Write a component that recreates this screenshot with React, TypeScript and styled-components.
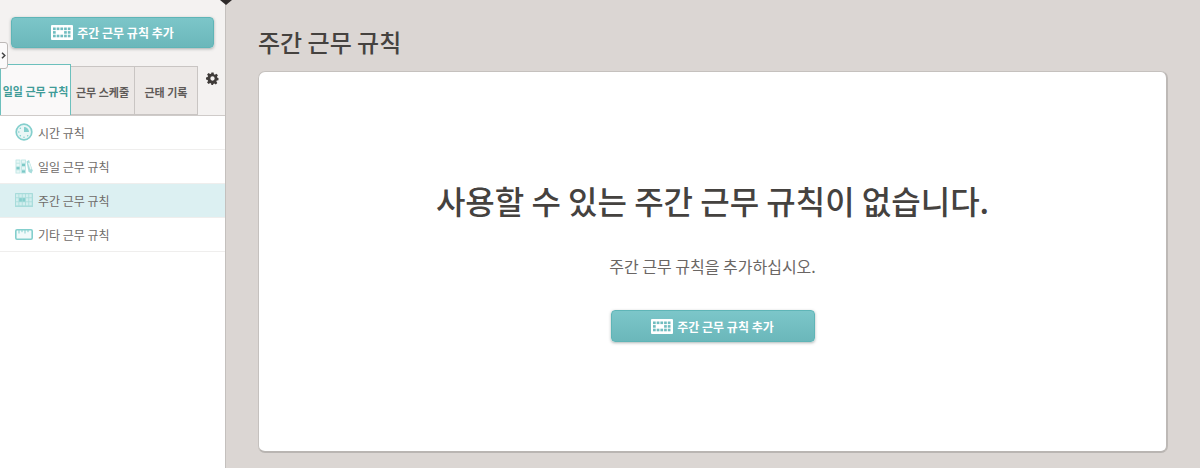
import React from "react";
import styled, { createGlobalStyle } from "styled-components";

const Global = createGlobalStyle`
  html, body { margin: 0; padding: 0; height: 100%; overflow: hidden; }
  body { font-family: "Noto Sans CJK KR", "Noto Sans", sans-serif; background: #dbd6d3; }
  #root { height: 468px; }
`;

const Page = styled.div`
  position: relative;
  display: flex;
  width: 1200px;
  height: 468px;
  overflow: hidden;
`;

const Sidebar = styled.aside`
  position: relative;
  flex: 0 0 225px;
  height: 100%;
  display: flex;
  flex-direction: column;
  background: #fff;
  border-right: 1px solid #c4c0bd;
  box-sizing: content-box;
`;

const SidebarTop = styled.div`
  height: 116px;
  box-sizing: border-box;
  background: #f4f2f1;
  border-bottom: 1px solid #cfcbc9;
  padding: 17px 11px 0 0;
  display: flex;
  flex-direction: column;
`;

const AddButton = styled.button<{ $width: number }>`
  width: ${(p) => p.$width}px;
  height: 32px;
  box-sizing: border-box;
  display: flex;
  align-items: center;
  justify-content: center;
  gap: 4px;
  padding: 0;
  color: #fff;
  font: 700 12px "Noto Sans CJK KR", sans-serif;
  background: linear-gradient(#7cc6c9, #6bb7ba);
  border: 1px solid #5fb5b7;
  border-radius: 4px;
  box-shadow: 0 1px 3px rgba(70, 90, 90, 0.45);
`;

const SideAdd = styled(AddButton)`
  margin-left: 11px;
`;

const CardAdd = styled(AddButton)`
  margin-top: 32px;
`;

const TabRow = styled.div`
  display: flex;
  align-items: flex-start;
  margin-top: 16px;
`;

const Tab = styled.div<{ $active?: boolean; $width: number }>`
  width: ${(p) => p.$width}px;
  height: ${(p) => (p.$active ? 51 : 49)}px;
  margin-top: ${(p) => (p.$active ? 0 : 2)}px;
  padding-top: 2px;
  box-sizing: border-box;
  display: flex;
  align-items: center;
  justify-content: center;
  white-space: nowrap;
  font-size: 11px;
  font-weight: 700;
  color: ${(p) => (p.$active ? "#3f9c98" : "#5e5a58")};
  background: ${(p) => (p.$active ? "#faf9f9" : "#ece8e6")};
  border: 1px solid ${(p) => (p.$active ? "#6cc0bd" : "#c9c5c3")};
  border-bottom: ${(p) => (p.$active ? "none" : "1px solid #c9c5c3")};
  border-left-width: ${(p) => (p.$active ? 1 : 0)}px;
  position: relative;
  z-index: ${(p) => (p.$active ? 1 : 0)};
`;

const Gear = styled.div`
  flex: 1;
  display: flex;
  justify-content: flex-end;
  padding: 8px 0 0 0;
  margin-right: -5px;
  color: #3f3b39;
`;

const Menu = styled.ul`
  list-style: none;
  margin: 0;
  padding: 0;
`;

const MenuItem = styled.li<{ $active?: boolean }>`
  height: 34px;
  box-sizing: border-box;
  display: flex;
  align-items: center;
  gap: 5px;
  padding: 0 0 1px 15px;
  font-size: 12px;
  color: #6f6b69;
  background: ${(p) => (p.$active ? "#dcf0f2" : "#fff")};
  border-bottom: 1px solid #efeeed;
`;

const Expander = styled.div`
  position: absolute;
  left: -3px;
  top: 42px;
  width: 11px;
  height: 27px;
  box-sizing: border-box;
  background: #fbfafa;
  border: 1px solid #bdb9b7;
  border-radius: 0 3px 3px 0;
  display: flex;
  align-items: center;
  justify-content: flex-end;
  padding-right: 1px;
  color: #444;
  z-index: 3;
`;

const Caret = styled.div`
  position: absolute;
  left: 220px;
  top: 0;
  width: 0;
  height: 0;
  border-left: 6px solid transparent;
  border-right: 6px solid transparent;
  border-top: 5px solid #2e2a2a;
  z-index: 4;
`;

const Main = styled.main`
  flex: 1;
  min-width: 0;
  display: flex;
  flex-direction: column;
  padding: 25px 32px 15px 32px;
  box-sizing: border-box;
`;

const Title = styled.h1`
  margin: 0 0 10px;
  height: 36px;
  line-height: 34px;
  font-size: 24px;
  font-weight: 500;
  color: #45423f;
`;

const Card = styled.section`
  flex: 1;
  display: flex;
  flex-direction: column;
  align-items: center;
  background: #fff;
  border: 1px solid #c5c1be;
  border-bottom: 2px solid #b9b5b2;
  border-right: 2px solid #bdb9b6;
  border-radius: 7px;
  box-sizing: border-box;
  padding-top: 104px;
`;

const Heading = styled.h2`
  margin: 0;
  height: 48px;
  line-height: 48px;
  font-size: 32px;
  font-weight: 500;
  color: #45423f;
  white-space: nowrap;
`;

const Sub = styled.p`
  margin: 30px 0 0;
  height: 24px;
  line-height: 24px;
  font-size: 16px;
  color: #6a6664;
`;

const GridIcon = () => (
  <svg width="22" height="15" viewBox="0 0 22 15">
    <rect width="22" height="15" rx="1" fill="#fff" />
    {[0, 1, 2].map((r) =>
      [0, 1, 2, 3, 4].map((c) => (
        <rect
          key={`${r}-${c}`}
          x={2 + c * 3.7}
          y={2.5 + r * 3.6}
          width="2.7"
          height="2.6"
          fill={r === 1 && (c === 1 || c === 2) ? "#fff" : "#6fbcbf"}
        />
      ))
    )}
  </svg>
);

const ClockIcon = () => (
  <svg width="18" height="18" viewBox="0 0 18 18">
    <circle cx="9" cy="9" r="7.8" fill="#e9f6f6" stroke="#84cfcd" strokeWidth="1.7" />
    <path d="M9 9V4a5 5 0 0 1 5 5Z" fill="#84cfcd" />
    {[180, 225, 270, 315, 135].map((a) => (
      <circle
        key={a}
        cx={9 + 5.2 * Math.sin((a * Math.PI) / 180)}
        cy={9 - 5.2 * Math.cos((a * Math.PI) / 180)}
        r="0.8"
        fill="#84cfcd"
      />
    ))}
  </svg>
);

const DayIcon = () => (
  <svg width="18" height="15" viewBox="0 0 18 15">
    {[0, 1].map((c) => (
      <rect key={c} x={0.5 + c * 5.5} y="0.5" width="5" height="14" rx="0.5" fill="#c4e8e7" />
    ))}
    {[0, 1, 2, 3].map((r) => (
      <React.Fragment key={r}>
        <rect x="1.5" y={1.5 + r * 3.3} width="3" height="2.2" fill={r === 2 ? "#7cc9c7" : "#e8f7f6"} />
        <rect x="7" y={1.5 + r * 3.3} width="3" height="2.2" fill={r === 1 || r === 3 ? "#7cc9c7" : "#e8f7f6"} />
      </React.Fragment>
    ))}
    <path d="M11.5 2.5 14 1l3.7 10.5-1.2 3-3-1.8Z" fill="#a7dcdb" />
    <path d="M13 4l1.6-.6 2 6.5-1.4.6Z" fill="#e8f7f6" />
  </svg>
);

const WeekIcon = () => (
  <svg width="18" height="14" viewBox="0 0 18 14">
    <rect width="18" height="14" rx="0.5" fill="#a8dcdb" />
    {[0, 1, 2].map((r) =>
      [0, 1, 2, 3, 4].map((c) => (
        <rect
          key={`${r}-${c}`}
          x={1 + c * 3.3}
          y={1.2 + r * 4}
          width="2.5"
          height="3.2"
          fill={r === 1 && (c === 1 || c === 2) ? "#86cfcd" : "#d2eeee"}
        />
      ))
    )}
  </svg>
);

const RulerIcon = () => (
  <svg width="18" height="11" viewBox="0 0 18 11">
    <rect x="0.8" y="0.8" width="16.4" height="9.4" rx="1.2" fill="#f2fafa" stroke="#84cfcd" strokeWidth="1.6" />
    <path d="M4 1v3.5M7 1v2.2M10 1v3.5M13 1v2.2" stroke="#84cfcd" strokeWidth="1" />
  </svg>
);

const GearIcon = () => (
  <svg width="13" height="13" viewBox="0 0 24 24" fill="currentColor">
    <path
      fillRule="evenodd"
      d="M10 1h4l.6 3.1 1.9.8 2.7-1.8 2.8 2.8-1.8 2.7.8 1.9L23 11v4l-3.1.6-.8 1.9 1.8 2.7-2.8 2.8-2.7-1.8-1.9.8L13 24h-3l-.6-3-1.9-.8-2.7 1.8L2 19.2l1.8-2.7-.8-1.9L0 14v-4l3-.6.8-1.9L2 4.8 4.8 2l2.7 1.8 1.9-.8ZM12 8a4 4 0 1 0 0 8 4 4 0 0 0 0-8Z"
    />
  </svg>
);

const Chevron = () => (
  <svg width="5" height="7" viewBox="0 0 5 7">
    <path d="M1 .8 3.8 3.5 1 6.2" fill="none" stroke="currentColor" strokeWidth="1.5" />
  </svg>
);

export default function App() {
  return (
    <Page>
      <Global />
      <Sidebar>
        <SidebarTop>
          <SideAdd $width={203}>
            <GridIcon />
            주간 근무 규칙 추가
          </SideAdd>
          <TabRow>
            <Tab $active $width={71}>일일 근무 규칙</Tab>
            <Tab $width={64}>근무 스케줄</Tab>
            <Tab $width={63}>근태 기록</Tab>
            <Gear>
              <GearIcon />
            </Gear>
          </TabRow>
        </SidebarTop>
        <Menu>
          <MenuItem><ClockIcon />시간 규칙</MenuItem>
          <MenuItem><DayIcon />일일 근무 규칙</MenuItem>
          <MenuItem $active><WeekIcon />주간 근무 규칙</MenuItem>
          <MenuItem><RulerIcon />기타 근무 규칙</MenuItem>
        </Menu>
        <Expander><Chevron /></Expander>
      </Sidebar>
      <Caret />
      <Main>
        <Title>주간 근무 규칙</Title>
        <Card>
          <Heading>사용할 수 있는 주간 근무 규칙이 없습니다.</Heading>
          <Sub>주간 근무 규칙을 추가하십시오.</Sub>
          <CardAdd $width={204}>
            <GridIcon />
            주간 근무 규칙 추가
          </CardAdd>
        </Card>
      </Main>
    </Page>
  );
}
